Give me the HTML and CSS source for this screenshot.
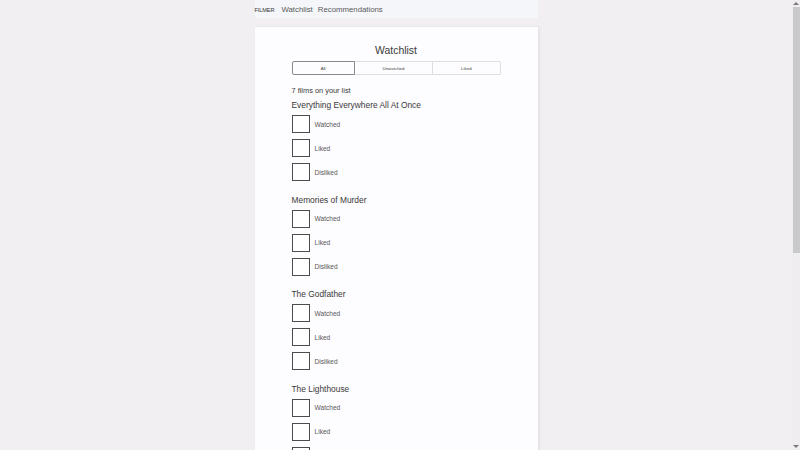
FILE: index.html
```html
<!DOCTYPE html>
<html lang="en">
<head>
<meta charset="utf-8">
<title>Filmer – Watchlist</title>
<link rel="stylesheet" href="styles.css">
</head>
<body>
<div class="page">
  <nav class="nav">
    <span class="brand">FILMER</span>
    <a class="nav-link">Watchlist</a>
    <a class="nav-link">Recommendations</a>
  </nav>
  <main class="card">
    <h1 class="title">Watchlist</h1>
    <div class="tabs">
      <button class="tab active">All</button>
      <button class="tab">Unwatched</button>
      <button class="tab">Liked</button>
    </div>
    <p class="count">7 films on your list</p>

    <section class="film">
      <h2 class="film-title">Everything Everywhere All At Once</h2>
      <label class="check"><span class="box"></span><span>Watched</span></label>
      <label class="check"><span class="box"></span><span>Liked</span></label>
      <label class="check"><span class="box"></span><span>Disliked</span></label>
    </section>
    <section class="film">
      <h2 class="film-title">Memories of Murder</h2>
      <label class="check"><span class="box"></span><span>Watched</span></label>
      <label class="check"><span class="box"></span><span>Liked</span></label>
      <label class="check"><span class="box"></span><span>Disliked</span></label>
    </section>
    <section class="film">
      <h2 class="film-title">The Godfather</h2>
      <label class="check"><span class="box"></span><span>Watched</span></label>
      <label class="check"><span class="box"></span><span>Liked</span></label>
      <label class="check"><span class="box"></span><span>Disliked</span></label>
    </section>
    <section class="film">
      <h2 class="film-title">The Lighthouse</h2>
      <label class="check"><span class="box"></span><span>Watched</span></label>
      <label class="check"><span class="box"></span><span>Liked</span></label>
      <label class="check"><span class="box"></span><span>Disliked</span></label>
    </section>
    <section class="film">
      <h2 class="film-title">Parasite</h2>
      <label class="check"><span class="box"></span><span>Watched</span></label>
      <label class="check"><span class="box"></span><span>Liked</span></label>
      <label class="check"><span class="box"></span><span>Disliked</span></label>
    </section>
    <section class="film">
      <h2 class="film-title">Spirited Away</h2>
      <label class="check"><span class="box"></span><span>Watched</span></label>
      <label class="check"><span class="box"></span><span>Liked</span></label>
      <label class="check"><span class="box"></span><span>Disliked</span></label>
    </section>
    <section class="film">
      <h2 class="film-title">Whiplash</h2>
      <label class="check"><span class="box"></span><span>Watched</span></label>
      <label class="check"><span class="box"></span><span>Liked</span></label>
      <label class="check"><span class="box"></span><span>Disliked</span></label>
    </section>
  </main>
</div>
<div class="scrollbar">
  <span class="arrow up"></span>
  <span class="thumb"></span>
  <span class="arrow down"></span>
</div>
</body>
</html>
```
FILE: styles.css
```css
html, body {
  margin: 0;
  padding: 0;
  overflow: hidden;
  height: 100%;
}
body {
  background: #f1eff2;
  font-family: "Liberation Sans", Arial, sans-serif;
  color: #444;
  padding-right: 8px;
  box-sizing: border-box;
}
.page {
  width: 283px;
  margin: 0 auto;
  display: flex;
  flex-direction: column;
  gap: 9px;
}
.nav {
  height: 18px;
  background: #f5f6f9;
  display: flex;
  align-items: center;
  gap: 5px;
  padding-top: 1px;
  box-sizing: border-box;
}
.brand {
  font-size: 5.6px;
  color: #333;
  letter-spacing: -0.1px;
  margin-right: 2px;
}
.nav-link {
  font-size: 7.8px;
  color: #5a5a5a;
}
.card {
  background: #fdfcfe;
  box-shadow: 1px 0 3px rgba(0, 0, 0, 0.08);
  padding: 17px 37px 20px;
  display: flex;
  flex-direction: column;
}
.title {
  margin: 0;
  font-size: 10.4px;
  font-weight: normal;
  line-height: 14px;
  text-align: center;
  color: #3a3a3a;
}
.tabs {
  margin-top: 3px;
  display: grid;
  grid-template-columns: 63fr 78fr 67fr;
  height: 14px;
}
.tab {
  font-family: inherit;
  font-size: 4.4px;
  color: #444;
  background: #fdfcfe;
  border: 1px solid #dedede;
  border-left: none;
  padding: 0;
  margin: 0;
  height: 14px;
}
.tab:last-child {
  border-radius: 0 2px 2px 0;
}
.tab.active {
  border: 1px solid #8a8a8a;
  border-radius: 2px 0 0 2px;
}
.count {
  margin: 11px 0 0;
  font-size: 7.4px;
  line-height: 10px;
  color: #3a3a3a;
}
.film {
  margin-top: 3px;
  display: flex;
  flex-direction: column;
  gap: 6px;
  margin-bottom: 12.5px;
}
.film + .film {
  margin-top: 0;
}
.film-title {
  margin: 0 0 -2px;
  font-size: 8.4px;
  font-weight: normal;
  line-height: 12px;
  color: #3a3a3a;
}
.check {
  display: flex;
  align-items: center;
  gap: 5px;
  font-size: 6.6px;
  color: #5a5a5a;
  height: 18px;
}
.box {
  width: 18px;
  height: 18px;
  box-sizing: border-box;
  border: 1.5px solid #4c4c4c;
  background: #fff;
}
.scrollbar {
  position: fixed;
  top: 0;
  right: 0;
  width: 8px;
  height: 100%;
  background: #efedf0;
  display: flex;
  flex-direction: column;
  align-items: center;
}
.arrow {
  width: 0;
  height: 0;
  border-left: 3px solid transparent;
  border-right: 3px solid transparent;
  margin: 2px 0;
}
.arrow.up {
  border-bottom: 3px solid #7a7a7a;
}
.arrow.down {
  border-top: 3px solid #7a7a7a;
}
.thumb {
  width: 7px;
  margin-left: 1px;
  height: 246px;
  background: #c9c8cb;
  flex: none;
}
.scrollbar .down {
  margin-top: auto;
}
```
